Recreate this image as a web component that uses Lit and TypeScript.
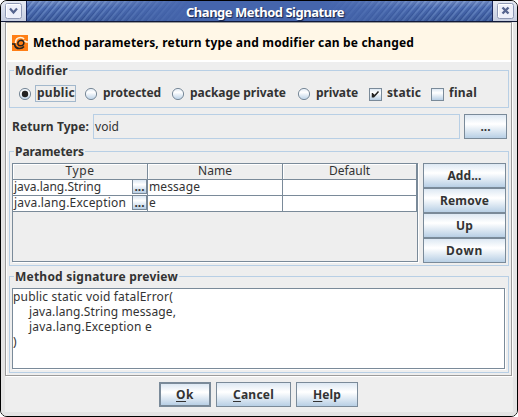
import { LitElement, html, css, svg } from "lit";
import { customElement, property } from "lit/decorators.js";

/** Text run tracked so that it fills an exact advance width. */
@customElement("fit-text")
class FitText extends LitElement {
  @property({ type: Number }) w = 0;
  @property() text = "";
  @property({ type: Boolean }) mnemonic = false;
  static styles = css`
    :host { display: inline-block; white-space: pre; line-height: 16px; height: 16px; flex: none; overflow: visible; }
    .run { display: inline-block; line-height: inherit; }
    .key { text-decoration: underline; text-underline-offset: 2px; text-decoration-thickness: 1px; text-decoration-skip-ink: none; }
  `;
  render() {
    const t = this.text;
    return html`<span class="run">${this.mnemonic ? html`<span class="key">${t[0]}</span>${t.slice(1)}` : t}</span>`;
  }
  async firstUpdated() {
    const run = this.renderRoot.querySelector(".run") as HTMLElement;
    const fit = () => {
      run.style.letterSpacing = "0px";
      const natural = run.getBoundingClientRect().width;
      run.style.letterSpacing = `${(this.w - natural) / this.text.length}px`;
      this.style.width = `${this.w}px`;
    };
    fit();
    await document.fonts.ready;
    fit();
  }
}

const txt = (text: string, w: number, mnemonic = false) =>
  html`<fit-text .text=${text} .w=${w} ?mnemonic=${mnemonic}></fit-text>`;

const radio = (on: boolean) => html`<svg class="mark" width="13" height="13" viewBox="0 0 13 13">
  <defs><linearGradient id="g" x2="0" y2="1"><stop offset="0" stop-color="#dde8f3"/><stop offset=".35" stop-color="#fff"/><stop offset="1" stop-color="#b8cfe5"/></linearGradient></defs>
  <circle cx="6" cy="6" r="5.6" fill="url(#g)" stroke="#7a8a99"/>
  ${on ? svg`<circle cx="6" cy="6" r="3.2" fill="#222"/>` : ""}
</svg>`;

const check = (on: boolean) => html`<span class="box"><svg width="11" height="11" viewBox="0 0 11 11">
  ${on ? svg`<path d="M2.500 4v4.500M3.500 5v3.500M4 7.500L8.500 2.500" fill="none" stroke="#222" stroke-width="1.500"/>` : ""}
</svg></span>`;

@customElement("app-root")
class AppRoot extends LitElement {
  static styles = css`
    :host { display: block; width: 518px; height: 417px; background: #fff; color: #333;
      font: 12px/16px "Noto Sans", "Open Sans", sans-serif; }
    * { box-sizing: border-box; }
    .window { width: 518px; height: 417px; border: 1px solid #000; border-radius: 7px; overflow: hidden;
      background: #eee; display: flex; flex-direction: column; }
    .bold { font-weight: 700; }
    .title { height: 21px; flex: none; display: grid; grid-template-columns: 25px 1fr 24px; border-bottom: 1px solid #101838; }
    .cap { background: linear-gradient(#e4e8f2, #c6cddf); display: flex; align-items: center; justify-content: center; }
    .cap svg { display: block; }
    .bar { border: solid #18265c; border-width: 0 1px; display: flex; justify-content: center; align-items: center; color: #fff;
      font-size: 13px; font-weight: 700; text-shadow: 1px 1px 1px #142248; padding: 2px 0 0 11px;
      background:
        linear-gradient(90deg, transparent 12%, #4565ac 36%, #4565ac 64%, transparent 88%),
        linear-gradient(#ffffff30, transparent 35%, #0a205038),
        repeating-linear-gradient(130deg, #6283c2 0 1px, #4868ae 2px 3px, #3a599d 4px, #6283c2 5px); }
    .frame { flex: 1; display: flex; flex-direction: column; border: solid #e4e4e4; border-width: 0 4px 4px; min-height: 0; }
    .pane { height: 354px; width: 507px; flex: none; border: 1px solid #9b9b9b; box-shadow: inset 1px 1px #fff, 1px 1px #fff; padding: 0 0 0 1px; }
    .banner { height: 37px; background: #fff7e7; display: flex; align-items: center; gap: 5px; padding: 2px 0 0 5px;
      color: #000; font-weight: 700; margin-right: 1px; }
    .content { border-top: 2px solid #fff; padding: 8px 2px 0; }
    .group { position: relative; width: 500px; border: 1px solid #b8cfe5; }
    .legend { position: absolute; left: 4px; top: -8px; background: #eee; padding: 0 1px; height: 16px; font-weight: 700; }
    .modifiers { height: 38px; display: flex; align-items: flex-start; padding: 14px 0 0 9px; font-weight: 700; }
    .option { display: flex; height: 17px; align-items: center; }
    .mark { margin: 1px 4px 0 0; flex: none; display: block; overflow: visible; }
    .box { width: 13px; height: 13px; flex: none; border: 1px solid #7a8a99; background: linear-gradient(#dde8f3, #fff 35%, #b8cfe5); margin: 1px 4px 0 0; }
    .box svg { display: block; }
    .lab { height: 17px; padding: 0 0 0 1px; display: flex; }
    .lab.focus { outline: 1px solid #a3b8cc; outline-offset: -1px; padding: 0 1px 0 2px; margin-left: -1px; }
    .return { display: flex; height: 25px; margin: 6px 0 0 3px; align-items: center; }
    .field { width: 367px; height: 25px; border: 1px solid #b8cfe5; margin: 0 4px 0 4px; padding: 4px 0 0 1px; }
    .btn { border: 1px solid #7a8a99; background: linear-gradient(#dde8f3, #fff 38%, #fff 40%, #b8cfe5); font-weight: 700;
      display: flex; align-items: center; justify-content: center; height: 25px; flex: none; }
    .more { width: 43px; }
    .params { height: 115px; margin-top: 12px; padding: 11px 2px 0; display: flex; justify-content: space-between; }
    .table { width: 406px; height: 99px; border: 1px solid #7a8a99; box-shadow: 1px 1px #fff; }
    .row { display: grid; grid-template-columns: 135px 135px 134px; height: 16px; background: #fff; }
    .row > span { border: solid #7a8a99; border-width: 0 1px 1px 0; display: flex; padding-left: 1px; }
    .row > .typed { justify-content: space-between; }
    .row.head { height: 15px; background: #eee; }
    .row.head > span { justify-content: center; box-shadow: inset 1px 1px #fff; padding: 0; }
    .row.head fit-text { margin-top: -1px; }
    .mini { width: 15px; height: 15px; border: 1px solid #7a8a99; background: linear-gradient(#dde8f3, #fff 35%, #b8cfe5); font-weight: 700;
      display: flex; justify-content: center; }
    .mini fit-text { margin-top: -1px; }
    .stack { width: 83px; }
    .preview { height: 97px; margin-top: 10px; padding: 11px 2px 0; }
    .code { width: 493px; height: 81px; border: 1px solid #7a8a99; background: #fff; box-shadow: 1px 1px #fff; }
    .line { height: 15px; display: flex; }
    .line fit-text { height: 15px; line-height: 15px; }
    .in { padding-left: 16px; }
    .actions { display: flex; gap: 5px; margin: 6px 0 0 154px; }
    .ok { width: 52px; border-width: 2px; }
    .cancel { width: 75px; } .help { width: 62px; }
  `;

  option(mark: unknown, label: string, w: number, advance: number, focus = false) {
    return html`<span class="option" style="width:${advance}px">${mark}<span class="lab ${focus ? "focus" : ""}">${txt(label, w)}</span></span>`;
  }

  row(type: string, tw: number, name: string, nw: number) {
    return html`<div class="row"><span class="typed">${txt(type, tw)}<span class="mini">${txt("...", 10)}</span></span>
      <span>${txt(name, nw)}</span><span></span></div>`;
  }

  render() {
    return html`<div class="window">
      <div class="title">
        <span class="cap"><svg width="17" height="16" viewBox="0 0 17 16">
          <rect x=".5" y=".5" width="16" height="15" rx="2" fill="#eef0fa" stroke="#8f99b5"/>
          <path d="M1.500 14V1.500H15" fill="none" stroke="#fff"/>
          <path d="M5 5.500l3.500 4 3.500-4" fill="none" stroke="#56658f" stroke-width="2.200"/></svg></span>
        <span class="bar">${txt("Change Method Signature", 158)}</span>
        <span class="cap"><svg width="17" height="16" viewBox="0 0 17 16">
          <rect x=".5" y=".5" width="16" height="15" rx="2" fill="#eef0fa" stroke="#8f99b5"/>
          <path d="M1.500 14V1.500H15" fill="none" stroke="#fff"/>
          <path d="M5.500 4.500l6 6M11.500 4.500l-6 6" fill="none" stroke="#56658f" stroke-width="2.400"/></svg></span>
      </div>
      <div class="frame">
        <div class="pane">
          <div class="banner">
            <svg width="16" height="16" viewBox="0 0 16 16"><rect width="16" height="16" fill="#ff7f16"/>
              <path d="M3.500 8C3.500 4.500 5.500 2.500 8.500 2.500c2 0 3 .8 3.500 1.500M12.500 5.500c.3 1 1 1.500 3.500 1.500" fill="none" stroke="#fff3dc" stroke-width="1.700"/>
              <path d="M0 9h2.500c.5 3 2.500 4.500 5 4.500 2 0 3.500-.8 4.500-2" fill="none" stroke="#222" stroke-width="1.700"/>
              <path d="M9.500 5.300C12 6 12.200 8 11.500 9.300 10.500 11.200 7 11.300 6 9.300 5.400 7.500 6.500 5.500 9.500 5.300" fill="none" stroke="#222" stroke-width="1.500"/></svg>
            ${txt("Method parameters, return type and modifier can be changed", 381)}
          </div>
          <div class="content">
            <div class="group modifiers"><span class="legend">${txt("Modifier", 53)}</span>
              ${this.option(radio(true), "public", 38, 66, true)}
              ${this.option(radio(false), "protected", 58, 87)}
              ${this.option(radio(false), "package private", 96, 126)}
              ${this.option(radio(false), "private", 42, 71)}
              ${this.option(check(true), "static", 34, 62)}
              ${this.option(check(false), "final", 28, 60)}
            </div>
            <div class="return"><span class="bold">${txt("Return Type:", 77)}</span>
              <span class="field">${txt("void", 24)}</span>
              <span class="btn more">${txt("...", 10)}</span></div>
            <div class="group params"><span class="legend">${txt("Parameters", 69)}</span>
              <div class="table">
                <div class="row head"><span>${txt("Type", 29)}</span><span>${txt("Name", 34)}</span><span>${txt("Default", 41)}</span></div>
                ${this.row("java.lang.String", 87, "message", 51)}
                ${this.row("java.lang.Exception", 112, "e", 7)}
              </div>
              <div class="stack">
                <div class="btn">${txt("Add...", 34)}</div>
                <div class="btn">${txt("Remove", 49)}</div>
                <div class="btn">${txt("Up", 17)}</div>
                <div class="btn">${txt("Down", 37)}</div>
              </div>
            </div>
            <div class="group preview"><span class="legend">${txt("Method signature preview", 163)}</span>
              <div class="code">
                <div class="line">${txt("public static void fatalError(", 160)}</div>
                <div class="line in">${txt("java.lang.String message,", 147)}</div>
                <div class="line in">${txt("java.lang.Exception e", 123)}</div>
                <div class="line">${txt(")", 4)}</div>
              </div>
            </div>
          </div>
        </div>
        <div class="actions">
          <div class="btn ok">${txt("Ok", 18, true)}</div>
          <div class="btn cancel">${txt("Cancel", 41, true)}</div>
          <div class="btn help">${txt("Help", 28, true)}</div>
        </div>
      </div>
    </div>`;
  }
}
